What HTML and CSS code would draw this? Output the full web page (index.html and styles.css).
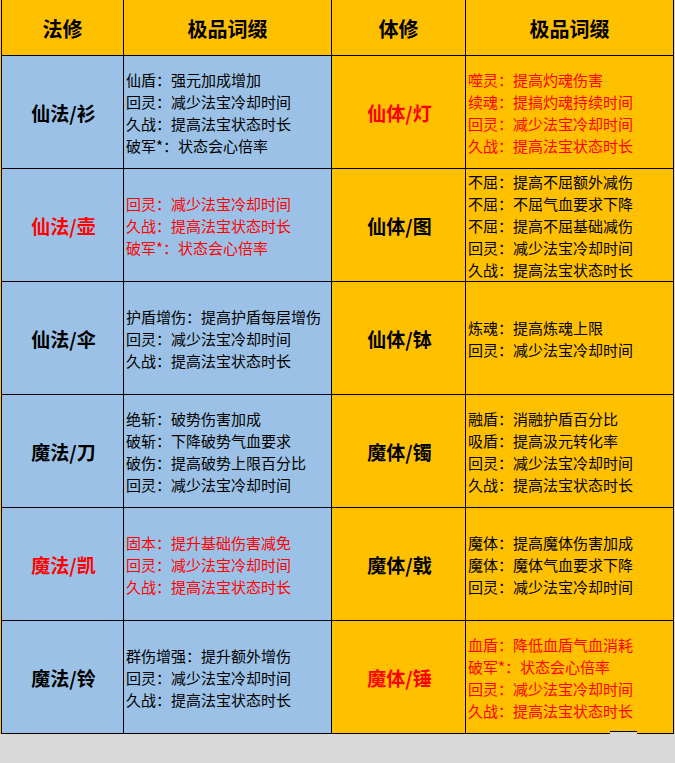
FILE: index.html
```html
<!DOCTYPE html>
<html lang="zh">
<head>
<meta charset="utf-8">
<title>极品词缀</title>
<link rel="stylesheet" href="styles.css">
</head>
<body>
<div class="wrap">
  <div class="sheet">
    <div class="cell head">法修</div>
    <div class="cell head">极品词缀</div>
    <div class="cell head">体修</div>
    <div class="cell head">极品词缀</div>

    <div class="cell blue label">仙法/衫</div>
    <div class="cell blue text">
      <div>仙盾：强元加成增加</div>
      <div>回灵：减少法宝冷却时间</div>
      <div>久战：提高法宝状态时长</div>
      <div>破军*：状态会心倍率</div>
    </div>
    <div class="cell gold label red">仙体/灯</div>
    <div class="cell gold text red">
      <div>噬灵：提高灼魂伤害</div>
      <div>续魂：提搞灼魂持续时间</div>
      <div>回灵：减少法宝冷却时间</div>
      <div>久战：提高法宝状态时长</div>
    </div>

    <div class="cell blue label red">仙法/壶</div>
    <div class="cell blue text red">
      <div>回灵：减少法宝冷却时间</div>
      <div>久战：提高法宝状态时长</div>
      <div>破军*：状态会心倍率</div>
    </div>
    <div class="cell gold label">仙体/图</div>
    <div class="cell gold text">
      <div>不屈：提高不屈额外减伤</div>
      <div>不屈：不屈气血要求下降</div>
      <div>不屈：提高不屈基础减伤</div>
      <div>回灵：减少法宝冷却时间</div>
      <div>久战：提高法宝状态时长</div>
    </div>

    <div class="cell blue label">仙法/伞</div>
    <div class="cell blue text">
      <div>护盾增伤：提高护盾每层增伤</div>
      <div>回灵：减少法宝冷却时间</div>
      <div>久战：提高法宝状态时长</div>
    </div>
    <div class="cell gold label">仙体/钵</div>
    <div class="cell gold text">
      <div>炼魂：提高炼魂上限</div>
      <div>回灵：减少法宝冷却时间</div>
    </div>

    <div class="cell blue label">魔法/刀</div>
    <div class="cell blue text">
      <div>绝斩：破势伤害加成</div>
      <div>破斩：下降破势气血要求</div>
      <div>破伤：提高破势上限百分比</div>
      <div>回灵：减少法宝冷却时间</div>
    </div>
    <div class="cell gold label">魔体/镯</div>
    <div class="cell gold text">
      <div>融盾：消融护盾百分比</div>
      <div>吸盾：提高汲元转化率</div>
      <div>回灵：减少法宝冷却时间</div>
      <div>久战：提高法宝状态时长</div>
    </div>

    <div class="cell blue label red">魔法/凯</div>
    <div class="cell blue text red">
      <div>固本：提升基础伤害减免</div>
      <div>回灵：减少法宝冷却时间</div>
      <div>久战：提高法宝状态时长</div>
    </div>
    <div class="cell gold label">魔体/戟</div>
    <div class="cell gold text">
      <div>魔体：提高魔体伤害加成</div>
      <div>魔体：魔体气血要求下降</div>
      <div>回灵：减少法宝冷却时间</div>
    </div>

    <div class="cell blue label">魔法/铃</div>
    <div class="cell blue text">
      <div>群伤增强：提升额外增伤</div>
      <div>回灵：减少法宝冷却时间</div>
      <div>久战：提高法宝状态时长</div>
    </div>
    <div class="cell gold label red">魔体/锤</div>
    <div class="cell gold text red">
      <div>血盾：降低血盾气血消耗</div>
      <div>破军*：状态会心倍率</div>
      <div>回灵：减少法宝冷却时间</div>
      <div>久战：提高法宝状态时长</div>
    </div>

    <div class="notch"></div>
  </div>
</div>
</body>
</html>
```

FILE: styles.css
```css
html, body {
  margin: 0;
  padding: 0;
  background: #d9d9d9;
  height: 100%;
}

body {
  font-family: "Noto Sans CJK SC", "Microsoft YaHei", sans-serif;
  color: #000;
}

.wrap {
  display: flex;
  background: #ffc000;
  padding-left: 1px;
  width: max-content;
}

.sheet {
  position: relative;
  display: grid;
  grid-template-columns: 121px 207px 133px 207px;
  grid-template-rows: 55px repeat(6, 112px);
  gap: 1px;
  background: #000;
  padding: 0 1px 1px 1px;
}

.cell {
  display: flex;
  flex-direction: column;
  justify-content: center;
}

.head {
  background: #ffc000;
  align-items: center;
  font-size: 20px;
  font-weight: bold;
  padding-top: 1px;
}

.blue { background: #9bc2e6; }
.gold { background: #ffc000; }

.label {
  align-items: center;
  font-size: 19px;
  font-weight: bold;
  padding-left: 2px;
}

.text {
  padding-left: 2px;
  padding-top: 1px;
  font-size: 15px;
  line-height: 22px;
  white-space: nowrap;
}

.red { color: #ff0000; }

.notch {
  position: absolute;
  left: 609px;
  bottom: 0;
  width: 27px;
  height: 2px;
  border-top: 1px solid #000;
  background: #d9d9d9;
}
```
